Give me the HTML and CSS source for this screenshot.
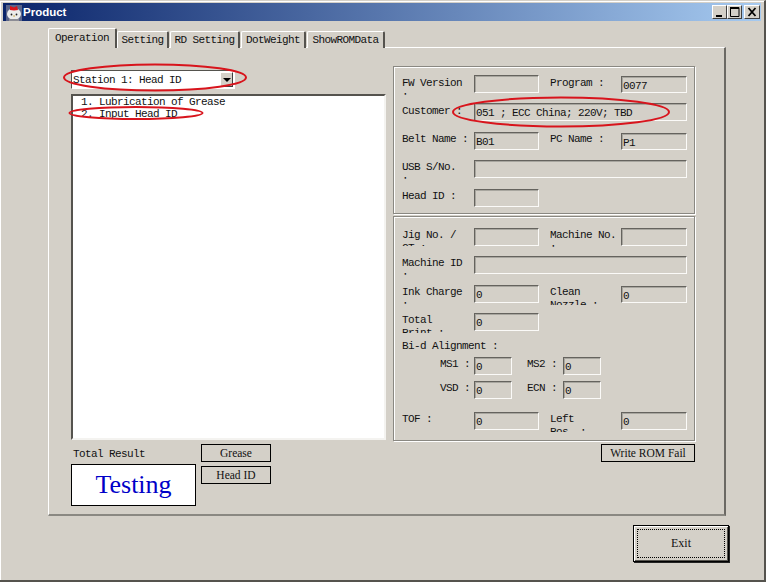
FILE: index.html
```html
<!DOCTYPE html>
<html lang="en">
<head>
<meta charset="utf-8">
<title>Product</title>
<link rel="stylesheet" href="styles.css">
</head>
<body>
<div class="window">
  <header class="titlebar">
    <svg class="app-icon" width="16" height="16" viewBox="0 0 16 16">
      <rect width="16" height="16" fill="#5a6488"/>
      <ellipse cx="8" cy="9" rx="7" ry="6" fill="#ececec"/>
      <path d="M3 14h10v2H3z" fill="#8c8c94"/>
      <path d="M4 1l4 1.500L11 1l1 4-4 .5-4-.5z" fill="#d8141c"/>
      <circle cx="5.500" cy="9.500" r=".9" fill="#222"/>
      <circle cx="10.500" cy="9.500" r=".9" fill="#222"/>
      <rect x="7.300" y="10.500" width="1.600" height="1" fill="#c9a020"/>
    </svg>
    <span class="title-text">Product</span>
    <div class="caption-buttons">
      <div class="caption-btn">
        <svg width="13" height="12" viewBox="0 0 13 12"><rect x="3" y="9" width="6" height="2" fill="#000"/></svg>
      </div>
      <div class="caption-btn">
        <svg width="13" height="12" viewBox="0 0 13 12"><path d="M2.500 1.500h8.500v9h-8.500z" fill="none" stroke="#000"/><rect x="2" y="1" width="9" height="2" fill="#000"/></svg>
      </div>
      <div class="caption-btn caption-btn--close">
        <svg width="14" height="12" viewBox="0 0 14 12"><path d="M3.500 2l7 8M10.500 2l-7 8" fill="none" stroke="#000" stroke-width="1.800"/></svg>
      </div>
    </div>
  </header>

  <main class="client">
    <nav class="tabs">
      <div class="tab tab--active">Operation</div>
      <div class="tab tab--w51">Setting</div>
      <div class="tab tab--w70">RD Setting</div>
      <div class="tab tab--w65">DotWeight</div>
      <div class="tab tab--w78">ShowROMData</div>
    </nav>

    <section class="panel">
      <div class="left-col">
        <div class="combo">
          <span class="combo-text">Station 1: Head ID</span>
          <span class="combo-btn"><i class="arrow"></i></span>
        </div>
        <div class="listbox">
          <div class="list-item">1. Lubrication of Grease</div>
          <div class="list-item">2. Input Head ID</div>
        </div>
        <div class="result-row">
          <div class="result">
            <div class="mono result-label">Total Result</div>
            <div class="result-box">Testing</div>
          </div>
          <div class="result-buttons">
            <div class="flat-btn flat-btn--w70">Grease</div>
            <div class="flat-btn flat-btn--w70">Head ID</div>
          </div>
        </div>
      </div>

      <div class="right-col">
        <div class="group group--top">
          <div class="row">
            <div class="label label--low">FW Version<br>:</div>
            <div class="field"></div>
            <div class="label label--second label--low">Program :</div>
            <div class="field field--second field--low">0077</div>
          </div>
          <div class="row">
            <div class="label label--low">Customer :</div>
            <div class="field field--wide">051 ; ECC China; 220V; TBD</div>
          </div>
          <div class="row row--extra">
            <div class="label">Belt Name :</div>
            <div class="field">B01</div>
            <div class="label label--second">PC Name :</div>
            <div class="field field--second field--low">P1</div>
          </div>
          <div class="row">
            <div class="label">USB S/No.<br>:</div>
            <div class="field field--wide"></div>
          </div>
          <div class="row row--extra">
            <div class="label">Head ID :</div>
            <div class="field"></div>
          </div>
        </div>

        <div class="group group--bottom">
          <div class="row">
            <div class="label label--short">Jig No. /<br>CT :</div>
            <div class="field"></div>
            <div class="label label--second">Machine No.<br>:</div>
            <div class="field field--second"></div>
          </div>
          <div class="row">
            <div class="label">Machine ID<br>:</div>
            <div class="field field--wide"></div>
          </div>
          <div class="row row--extra">
            <div class="label">Ink Charge<br>:</div>
            <div class="field">0</div>
            <div class="label label--second">Clean<br>Nozzle :</div>
            <div class="field field--second field--low">0</div>
          </div>
          <div class="row">
            <div class="label">Total<br>Print :</div>
            <div class="field">0</div>
          </div>
          <div class="mono bid-title">Bi-d Alignment :</div>
          <div class="row row--sub">
            <div class="sub-label">MS1 :</div>
            <div class="field field--small">0</div>
            <div class="sub-label sub-label--second">MS2 :</div>
            <div class="field field--small">0</div>
          </div>
          <div class="row row--sub row--vsd">
            <div class="sub-label">VSD :</div>
            <div class="field field--small">0</div>
            <div class="sub-label sub-label--second">ECN :</div>
            <div class="field field--small">0</div>
          </div>
          <div class="row row--tof">
            <div class="label">TOF :</div>
            <div class="field">0</div>
            <div class="label label--second">Left<br>Pos. :</div>
            <div class="field field--second">0</div>
          </div>
        </div>

        <div class="flat-btn flat-btn--write">Write ROM Fail</div>
      </div>
    </section>

    <div class="footer">
      <div class="exit-btn"><span class="exit-focus">Exit</span></div>
    </div>
  </main>

  <svg class="marks" width="766" height="582" viewBox="0 0 766 582">
    <ellipse cx="155" cy="77.500" rx="91" ry="13" />
    <ellipse cx="136" cy="113" rx="66.500" ry="6" />
    <ellipse cx="561" cy="112" rx="108" ry="14.500" />
  </svg>
</div>
</body>
</html>
```

FILE: styles.css
```css
* { box-sizing: border-box; }

html, body {
  margin: 0;
  padding: 0;
}

body {
  width: 766px;
  height: 582px;
  overflow: hidden;
  background: #d4d0c8;
}

.window {
  position: relative;
  width: 766px;
  height: 582px;
  padding: 3px 3px 0 3px;
  display: flex;
  flex-direction: column;
  background: #d4d0c8;
  border-top: 1px solid #d4d0c8;
  border-right: 2px solid #55534e;
  border-bottom: 2px solid #55534e;
  box-shadow: inset 1px 1px 0 #fff;
}

.mono,
.label,
.sub-label,
.field,
.tab,
.list-item,
.combo-text {
  font-family: "Liberation Mono", monospace;
  font-size: 11px;
  letter-spacing: -0.6px;
  color: #111;
}

/* Title bar */
.titlebar {
  flex: none;
  height: 18px;
  margin-top: -1px;
  display: flex;
  align-items: center;
  padding-left: 3px;
  background: linear-gradient(90deg, #0a246a 0%, #a6caf0 100%);
}

.app-icon {
  flex: none;
  margin-top: 2px;
}

.title-text {
  margin-left: 1px;
  font-family: "Liberation Sans", sans-serif;
  font-size: 11.500px;
  font-weight: 700;
  color: #fff;
}

.caption-buttons {
  margin-left: auto;
  margin-right: 1px;
  display: flex;
}

.caption-btn {
  width: 15px;
  height: 14px;
  background: #d4d0c8;
  border: 1px solid;
  border-color: #fff #404040 #404040 #fff;
  display: flex;
  align-items: center;
  justify-content: center;
}

.caption-btn--close {
  width: 16px;
  margin-left: 2px;
}

/* Client */
.client {
  flex: 1;
  padding: 7px 0 0 45px;
  display: flex;
  flex-direction: column;
}

.tabs {
  flex: none;
  height: 20px;
  display: flex;
  align-items: flex-end;
  position: relative;
  z-index: 1;
  margin-bottom: -1px;
}

.tab {
  height: 17px;
  padding-top: 2px;
  text-align: center;
  background: #d4d0c8;
  border: 1px solid #fff;
  border-bottom: 0;
  border-right: 2px solid #55534e;
  border-radius: 2px 2px 0 0;
  margin-right: 1px;
}

.tab--active {
  width: 69px;
  height: 20px;
  padding-top: 3px;
  margin-right: 0;
}

.tab--w51 { width: 52px; }
.tab--w70 { width: 70px; }
.tab--w65 { width: 65px; }
.tab--w78 { width: 78px; }

.panel {
  flex: none;
  width: 678px;
  height: 469px;
  padding: 18px 0 0 22px;
  display: flex;
  gap: 7px;
  border: 1px solid #fff;
  border-right: 2px solid #6b6964;
  border-bottom: 2px solid #8a8882;
}

/* Left column */
.left-col {
  width: 315px;
  padding-top: 4px;
  display: flex;
  flex-direction: column;
}

.combo {
  width: 164px;
  height: 19px;
  display: flex;
  align-items: center;
  justify-content: space-between;
  background: #fff;
  border: 1px solid;
  border-color: #55534e #fff #fff #55534e;
  padding: 0 1px;
}

.combo-btn {
  width: 13px;
  height: 15px;
  background: #d4d0c8;
  border: 1px solid;
  border-color: #fff #404040 #404040 #fff;
  display: flex;
  align-items: center;
  justify-content: center;
}

.arrow {
  width: 0;
  height: 0;
  border-left: 4px solid transparent;
  border-right: 4px solid transparent;
  border-top: 4px solid #000;
}

.listbox {
  width: 315px;
  height: 346px;
  margin-top: 5px;
  padding: 0 0 0 8px;
  background: #fff;
  border: 2px solid;
  border-color: #55534e #f4f3f0 #f4f3f0 #55534e;
}

.list-item {
  height: 12px;
  line-height: 12px;
}

.result-row {
  margin-top: 4px;
  display: flex;
  gap: 5px;
}

.result {
  width: 125px;
}

.result-label {
  height: 20px;
  padding: 5px 0 0 2px;
  line-height: 11px;
}

.result-box {
  height: 42px;
  background: #fff;
  border: 1px solid #000;
  font-family: "Liberation Serif", serif;
  font-size: 26px;
  line-height: 40px;
  text-align: center;
  color: #0000c8;
}

.result-buttons {
  display: flex;
  flex-direction: column;
  gap: 4px;
}

.flat-btn {
  height: 18px;
  border: 1px solid #000;
  font-family: "Liberation Serif", serif;
  font-size: 11.500px;
  line-height: 16px;
  text-align: center;
  color: #111;
}

.flat-btn--w70 { width: 70px; }

.flat-btn--write {
  width: 94px;
  margin-top: 3px;
  align-self: flex-end;
}

/* Right column */
.right-col {
  width: 302px;
  display: flex;
  flex-direction: column;
}

.group {
  border: 1px solid #8a8882;
  box-shadow: inset 1px 1px 0 #fff, 1px 1px 0 #fff;
  display: flex;
  flex-direction: column;
  padding-left: 8px;
  gap: 10px;
}

.group--top {
  height: 148px;
  padding-top: 8px;
  margin-bottom: 2px;
}

.group--bottom {
  height: 225px;
  padding-top: 11px;
}

.row {
  flex: none;
  height: 18px;
  display: flex;
  align-items: flex-start;
}

.row--extra { margin-top: 1px; }

.label {
  flex: none;
  width: 72px;
  height: 20px;
  overflow: hidden;
  padding-top: 1px;
  line-height: 13px;
}

.label--low { padding-top: 2px; }
.label--short { height: 18px; }

.label--second {
  width: 71px;
  margin-left: 11px;
}

.field {
  flex: none;
  width: 65px;
  height: 18px;
  padding: 4px 0 0 1px;
  line-height: 11px;
  border: 1px solid;
  border-color: #65635e #fbfaf8 #fbfaf8 #65635e;
  box-shadow: inset 1px 1px 0 #a8a69f;
}

.field--second { width: 66px; }
.field--low { margin-top: 1px; height: 17px; }
.field--wide { width: 213px; }
.field--small { width: 38px; }

.bid-title {
  flex: none;
  height: 13px;
  margin-top: -1px;
  line-height: 13px;
}

.row--sub { padding-left: 38px; margin-top: -6px; }
.row--vsd { margin-top: -4px; }
.row--tof { margin-top: 3px; }

.sub-label {
  flex: none;
  width: 34px;
  padding-top: 1px;
  line-height: 13px;
}

.sub-label--second {
  width: 36px;
  margin-left: 15px;
}

/* Exit */
.footer {
  flex: none;
  width: 681px;
  margin-top: 9px;
  display: flex;
  justify-content: flex-end;
}

.exit-btn {
  width: 96px;
  height: 37px;
  padding: 3px;
  background: #d4d0c8;
  border: 1px solid #000;
  box-shadow: inset 1px 1px 0 #fff, inset -1px -1px 0 #55534e, 1px 1px 0 #222;
}

.exit-focus {
  display: block;
  height: 100%;
  border: 1px dotted #000;
  font-family: "Liberation Serif", serif;
  font-size: 12px;
  line-height: 27px;
  text-align: center;
  color: #111;
}

/* Hand-drawn marks over the screenshot */
.marks {
  position: absolute;
  left: 0;
  top: -1px;
  pointer-events: none;
}

.marks ellipse {
  fill: none;
  stroke: #d8141c;
  stroke-width: 2;
}
```
